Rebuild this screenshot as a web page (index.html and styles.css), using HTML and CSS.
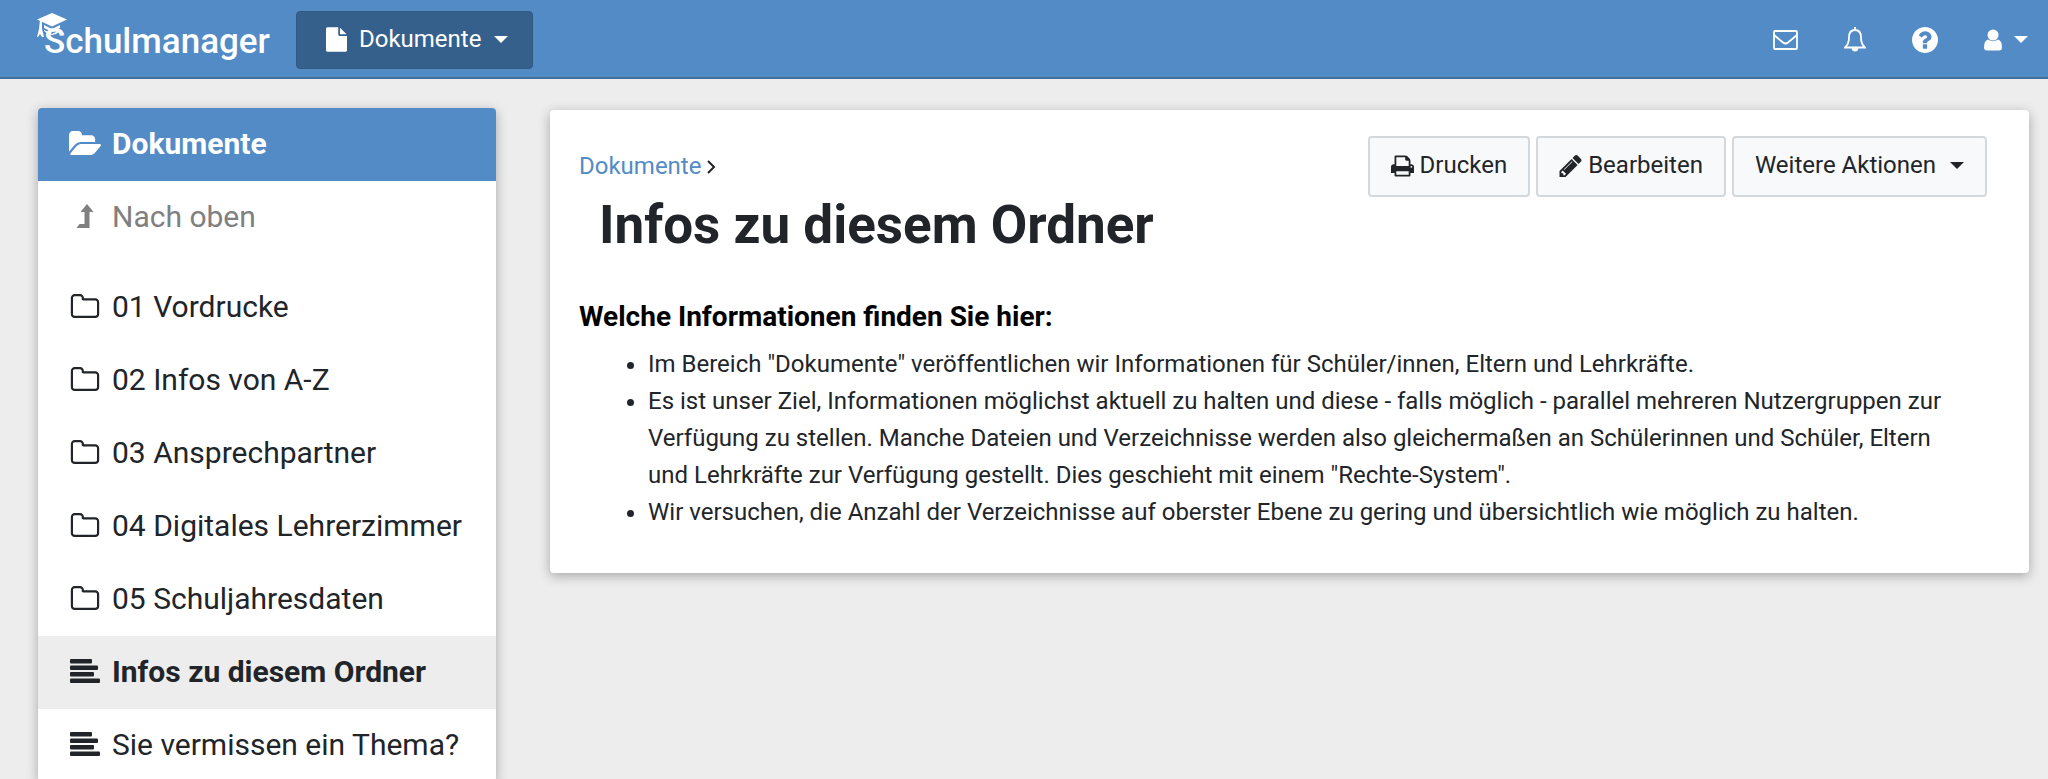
FILE: index.html
```html
<!DOCTYPE html>
<html lang="de">
<head>
  <meta charset="UTF-8" />
  <meta name="viewport" content="width=device-width, initial-scale=1.0" />
  <title>Schulmanager - Dokumente</title>
  <link rel="stylesheet" href="styles.css">
</head>
<body>

  <!-- Icons -->
  <svg class="sprite" aria-hidden="true">
    <symbol id="folder-o" viewBox="0 128 1664 1408">
      <path d="M1536 1312v-704q0-40-28-68t-68-28h-704q-40 0-68-28t-28-68v-64q0-40-28-68t-68-28h-320q-40 0-68 28t-28 68v960q0 40 28 68t68 28h1216q40 0 68-28t28-68zm128-704v704q0 92-66 158t-158 66h-1216q-92 0-158-66t-66-158v-960q0-92 66-158t158-66h320q92 0 158 66t66 158v32h672q92 0 158 66t66 158z"/>
    </symbol>
    <symbol id="text" viewBox="0 0 30 24">
      <rect x="0" y="0" width="22" height="4.500" rx="1"/>
      <rect x="0" y="6.500" width="28" height="4.500" rx="1"/>
      <rect x="0" y="13" width="24" height="4.500" rx="1"/>
      <rect x="0" y="19.500" width="30" height="4.500" rx="1"/>
    </symbol>
    <symbol id="caret" viewBox="0 0 14 7">
      <path d="M0 0h14L7 7z"/>
    </symbol>
  </svg>

  <header class="navbar">
    <a class="brand" href="#">
      <svg class="brand-cap" viewBox="0 0 30 25">
        <path d="M15 0l15 6.500-15 7-15-7z"/>
        <path d="M3 7h2v9l2 8H5l-2-3-2 3H0l2-8z"/>
        <path d="M7 12l8 4 8-4v3l-8 4-8-4zM7 17l8 4 8-4v1l-4 3-4 1-4-1-4-3z"/>
      </svg>
      Schulmanager
    </a>
    <button class="module-button" type="button">
      <svg class="icon-file" viewBox="128 0 1536 1792"><path d="M1152 512v-472q22 14 36 28l408 408q14 14 28 36h-472zm-128 32q0 40 28 68t68 28h544v1056q0 40-28 68t-68 28h-1344q-40 0-68-28t-28-68v-1600q0-40 28-68t68-28h800v544z"/></svg>
      Dokumente
      <svg class="caret"><use href="#caret"/></svg>
    </button>
    <nav class="tools">
      <a href="#" aria-label="Nachrichten">
        <svg class="icon-mail" viewBox="0 0 25 20"><rect x="1" y="1" width="23" height="18" rx="1"/><path d="M1 5l9 7.500q2.500 2 5 0L24 5"/></svg>
      </a>
      <a href="#" aria-label="Benachrichtigungen">
        <svg class="icon-bell" viewBox="0 0 22 25"><path d="M1 20.500q4-3.500 4-10Q5 3 11 3t6 7.500q0 6.500 4 10zM11 3V0"/><path class="clapper" d="M7.500 21h7q-.500 3.500-3.500 3.500T7.500 21z"/></svg>
      </a>
      <a href="#" aria-label="Hilfe">
        <svg class="icon-help" viewBox="128 128 1536 1536"><path d="M1024 1376v-192q0-14-9-23t-23-9h-192q-14 0-23 9t-9 23v192q0 14 9 23t23 9h192q14 0 23-9t9-23zm256-672q0-88-55.500-163t-138.500-116-170-41q-243 0-371 213-15 24 8 42l132 100q7 6 19 6 16 0 25-12 53-68 86-92 34-24 86-24 48 0 85.500 26t37.500 59q0 38-20 61t-68 45q-63 28-115.500 86.500t-52.500 125.500v36q0 14 9 23t23 9h192q14 0 23-9t9-23q0-19 21.500-49.500t54.500-49.500q32-18 49-28.500t46-35 44.500-48 28-60.500 12.500-81zm384 192q0 209-103 385.500t-279.500 279.500-385.500 103-385.500-103-279.500-279.500-103-385.500 103-385.500 279.500-279.500 385.500-103 385.500 103 279.500 279.500 103 385.500z"/></svg>
      </a>
      <a class="user" href="#" aria-label="Benutzer">
        <svg class="icon-user" viewBox="0 0 18 22"><circle cx="9" cy="6" r="5.500"/><path d="M4 10.500q5 3.500 10 0 4 1 4 8 0 3-3 3H3q-3 0-3-3 0-7 4-8z"/></svg>
        <svg class="caret"><use href="#caret"/></svg>
      </a>
    </nav>
  </header>

  <div class="page">
    <nav class="sidebar">
      <a class="item head" href="#">
        <svg viewBox="0 128 1879 1408"><path d="M1879 952q0 31-31 66l-336 396q-43 51-120.500 86.500t-143.500 35.500h-1088q-34 0-60.500-13t-26.500-43q0-31 31-66l336-396q43-51 120.500-86.500t143.500-35.500h1088q34 0 60.500 13t26.500 43zm-343-344v160h-832q-94 0-197 47.500t-164 119.500l-337 396-5 6q0-4-.5-12.500t-.5-12.500v-960q0-92 66-158t158-66h320q92 0 158 66t66 158v32h544q92 0 158 66t66 158z"/></svg>
        Dokumente
      </a>
      <a class="item up" href="#">
        <svg viewBox="0 0 17 24"><path d="M10.500 0L17 8h-4v16H0l3-4h5V8H4z"/></svg>
        Nach oben
      </a>
      <a class="item" href="#"><svg><use href="#folder-o"/></svg>01 Vordrucke</a>
      <a class="item" href="#"><svg><use href="#folder-o"/></svg>02 Infos von A-Z</a>
      <a class="item" href="#"><svg><use href="#folder-o"/></svg>03 Ansprechpartner</a>
      <a class="item" href="#"><svg><use href="#folder-o"/></svg>04 Digitales Lehrerzimmer</a>
      <a class="item" href="#"><svg><use href="#folder-o"/></svg>05 Schuljahresdaten</a>
      <a class="item active" href="#"><svg><use href="#text"/></svg>Infos zu diesem Ordner</a>
      <a class="item" href="#"><svg><use href="#text"/></svg>Sie vermissen ein Thema?</a>
    </nav>

    <main class="card">
      <div class="card-top">
        <div>
          <div class="breadcrumb">
            <a href="#">Dokumente</a>
            <svg class="chevron" viewBox="0 0 9 14"><path d="M1 1l6 6-6 6"/></svg>
          </div>
          <h1>Infos zu diesem Ordner</h1>
        </div>
        <div class="actions">
          <button class="btn" type="button">
            <svg viewBox="64 128 1664 1536"><path d="M448 1536h896v-256h-896v256zm0-640h896v-384h-160q-40 0-68-28t-28-68v-160h-640v640zm1152 64q0-26-19-45t-45-19-45 19-19 45 19 45 45 19 45-19 19-45zm128 0v416q0 13-9.500 22.500t-22.500 9.500h-224v160q0 40-28 68t-68 28h-960q-40 0-68-28t-28-68v-160h-224q-13 0-22.500-9.500t-9.500-22.500v-416q0-79 56.500-135.500t135.500-56.500h64v-544q0-40 28-68t68-28h672q40 0 88 20t76 48l152 152q28 28 48 76t20 88v256h64q79 0 135.500 56.500t56.500 135.500z"/></svg>
            Drucken
          </button>
          <button class="btn" type="button">
            <svg viewBox="128 149 1515 1515"><path d="M491 1536l91-91-235-235-91 91v107h128v128h107zm523-928q0-22-22-22-10 0-17 7l-542 542q-7 7-7 17 0 22 22 22 10 0 17-7l542-542q7-7 7-17zm-54-192l416 416-832 832h-416v-416zm683 96q0 53-37 90l-166 166-416-416 166-165q36-38 90-38 53 0 91 38l235 234q37 39 37 91z"/></svg>
            Bearbeiten
          </button>
          <button class="btn" type="button">
            Weitere Aktionen
            <svg class="caret"><use href="#caret"/></svg>
          </button>
        </div>
      </div>

      <h2>Welche Informationen finden Sie hier:</h2>
      <ul>
        <li>Im Bereich "Dokumente" veröffentlichen wir Informationen für Schüler/innen, Eltern und Lehrkräfte.</li>
        <li>Es ist unser Ziel, Informationen möglichst aktuell zu halten und diese - falls möglich - parallel mehreren Nutzergruppen zur Verfügung zu stellen. Manche Dateien und Verzeichnisse werden also gleichermaßen an Schülerinnen und Schüler, Eltern und Lehrkräfte zur Verfügung gestellt. Dies geschieht mit einem "Rechte-System".</li>
        <li>Wir versuchen, die Anzahl der Verzeichnisse auf oberster Ebene zu gering und übersichtlich wie möglich zu halten.</li>
      </ul>
    </main>
  </div>

</body>
</html>
```
FILE: styles.css
```css
:root {
  --blue: #528bc5;
  --blue-dark: #35608b;
  --text: #212529;
  --grey: #ededed;
}
* {
  box-sizing: border-box;
}
html {
  overflow: hidden;
}
body {
  margin: 0;
  background: var(--grey);
  color: var(--text);
  font-family: Roboto, "Liberation Sans", sans-serif;
  font-size: 24px;
  line-height: 37px;
}
a {
  color: inherit;
  text-decoration: none;
}
button {
  font: inherit;
  color: inherit;
  cursor: pointer;
}
svg {
  fill: currentColor;
  flex: none;
}
.sprite {
  display: none;
}
.caret {
  width: 14px;
  height: 7px;
}

/* Navbar */
.navbar {
  display: flex;
  align-items: center;
  height: 79px;
  padding: 2px 20px 0 44px;
  background: var(--blue);
  border-bottom: 2px solid #41709f;
  color: #fff;
}
.brand {
  position: relative;
  margin-right: 26px;
  padding-top: 4px;
  font-size: 35px;
  font-weight: 500;
}
.brand-cap {
  position: absolute;
  left: -7px;
  top: -6px;
  width: 30px;
  height: 25px;
}
.module-button {
  display: flex;
  align-items: center;
  height: 58px;
  padding: 0 24px 0 29px;
  background: var(--blue-dark);
  border: 1px solid #315a83;
  border-radius: 4px;
}
.module-button .caret {
  margin-left: 13px;
}
.icon-file {
  width: 21px;
  height: 25px;
  margin-right: 12px;
}
.tools {
  display: flex;
  align-items: center;
  gap: 46px;
  margin-left: auto;
}
.tools a {
  display: flex;
  align-items: center;
}
.icon-mail,
.icon-bell {
  fill: none;
  stroke: #fff;
  stroke-width: 1.8;
}
.icon-mail {
  width: 25px;
  height: 20px;
}
.icon-bell {
  width: 22px;
  height: 25px;
}
.clapper {
  fill: #fff;
  stroke: none;
}
.icon-help {
  width: 26px;
  height: 26px;
}
.icon-user {
  width: 18px;
  height: 22px;
}
.user {
  gap: 12px;
}

/* Page */
.page {
  display: flex;
  align-items: flex-start;
  gap: 54px;
  padding: 29px 19px 0 38px;
}
.sidebar,
.card {
  background: #fff;
  border-radius: 4px;
  box-shadow: 0 3px 12px rgba(0, 0, 0, 0.3);
}
.sidebar {
  flex: none;
  width: 458px;
  font-size: 30px;
}
.item {
  display: flex;
  align-items: center;
  height: 73px;
  padding: 0 31px 3px;
}
.item svg {
  width: 32px;
  height: 24px;
  margin-right: 11px;
}
.head {
  background: var(--blue);
  border-radius: 4px 4px 0 0;
  color: #fff;
  font-weight: 700;
}
.up {
  margin-bottom: 17px;
  color: #808080;
}
.active {
  background: var(--grey);
  font-weight: 700;
}

/* Content */
.card {
  flex: 1;
  margin-top: 2px;
  padding: 26px 42px 42px 29px;
}
.card-top {
  display: flex;
  justify-content: space-between;
}
.breadcrumb {
  display: flex;
  align-items: center;
  gap: 6px;
  padding-top: 12px;
}
.breadcrumb a {
  color: var(--blue);
}
.chevron {
  width: 9px;
  height: 14px;
  fill: none;
  stroke: currentColor;
  stroke-width: 2;
}
h1 {
  margin: 10px 0 0 20px;
  font-size: 53px;
  line-height: 60px;
}
.actions {
  display: flex;
  align-items: flex-start;
  gap: 6px;
}
.btn {
  display: flex;
  align-items: center;
  gap: 6px;
  height: 61px;
  padding: 0 21px 2px;
  background: #f8f9fa;
  border: 2px solid #d3d8dc;
  border-radius: 4px;
}
.btn svg {
  width: 23px;
  height: 22px;
}
.btn .caret {
  width: 14px;
  height: 7px;
  margin-left: 8px;
}
h2 {
  margin: 45px 0 12px;
  color: #000;
  font-size: 28px;
  line-height: 34px;
}
ul {
  margin: 0;
  padding: 0 24px 0 69px;
}
```
